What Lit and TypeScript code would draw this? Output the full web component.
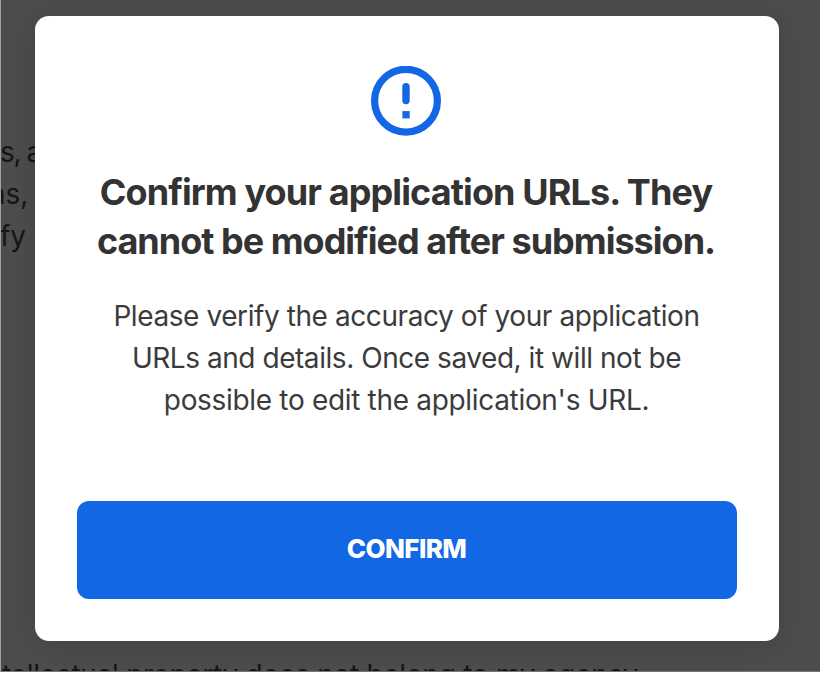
import { LitElement, html, css } from "lit";
import { customElement } from "lit/decorators.js";

@customElement("alert-icon")
class AlertIcon extends LitElement {
  static styles = css`
    :host { display: block; width: 70px; height: 70px; margin-right: 2px; }
    svg { display: block; }
  `;
  render() {
    return html`<svg width="70" height="70" viewBox="0 0 70 70" aria-hidden="true">
      <circle cx="35" cy="34.7" r="31.4" fill="none" stroke="#1267e5" stroke-width="7.2" />
      <rect x="31.3" y="17.1" width="7.4" height="21.2" rx="3.7" fill="#1267e5" />
      <rect x="31.4" y="45.1" width="7.3" height="7.3" fill="#1267e5" />
    </svg>`;
  }
}

@customElement("app-root")
class AppRoot extends LitElement {
  static styles = css`
    :host { display: block; height: 674px; background: #fff; overflow: hidden;
      font-family: Inter, "Liberation Sans", sans-serif; }
    .screen { position: relative; box-sizing: border-box; height: 672px; overflow: hidden;
      background: #4c4c4c; border-left: 1px solid #a3a3a3; border-bottom: 1px solid #777;
      display: flex; align-items: flex-start; padding: 16px 0 0 34px; }
    .behind { position: absolute; margin: 0; color: #151515; font-size: 28px; line-height: 42px; white-space: nowrap; }
    .terms { left: -1px; top: 131px; }
    .terms span { display: block; }
    .terms .lead { letter-spacing: -1.4px; }
    .terms .cut { margin-left: -11px; }
    .footer { left: 1px; top: 654px; letter-spacing: -0.27px; }
    .card { position: relative; box-sizing: border-box; width: 744px; height: 625px;
      background: #fff; border-radius: 14px; box-shadow: 0 4px 24px rgba(0,0,0,.12);
      display: flex; flex-direction: column; align-items: center; padding: 50px 42px 42px; }
    h1 { margin: 32px 2px 0 0; font-size: 36px; line-height: 49px; font-weight: 700; color: #333; text-align: center; }
    p { margin: 0; }
    .body { margin: 29px 1px 0 0; font-size: 28px; line-height: 42px; color: #3b3b3b; text-align: center; }
    .line { display: block; white-space: nowrap; }
    .h-a { letter-spacing: -0.89px; }
    .h-b { letter-spacing: -0.99px; }
    .b-a { letter-spacing: -0.42px; }
    .b-b { letter-spacing: -0.45px; }
    .b-c { letter-spacing: -0.32px; }
    button { margin-top: auto; width: 100%; height: 98px; border: 0; border-radius: 12px; background: #1267e5;
      color: #fff; font: 800 26px/96px Inter, "Liberation Sans", sans-serif; letter-spacing: -0.6px; padding: 0 1px 2px 0; }
  `;
  render() {
    return html`
      <div class="screen">
        <p class="behind terms"><span class="lead">s, a</span><span class="cut">ns,</span><span>fy</span></p>
        <p class="behind footer">tellectual property does not belong to my agency</p>
        <section class="card" role="dialog">
          <alert-icon></alert-icon>
          <h1><span class="line h-a">Confirm your application URLs. They</span><span class="line h-b">cannot be modified after submission.</span></h1>
          <p class="body"><span class="line b-a">Please verify the accuracy of your application</span><span class="line b-b">URLs and details. Once saved, it will not be</span><span class="line b-c">possible to edit the application's URL.</span></p>
          <button>CONFIRM</button>
        </section>
      </div>`;
  }
}
